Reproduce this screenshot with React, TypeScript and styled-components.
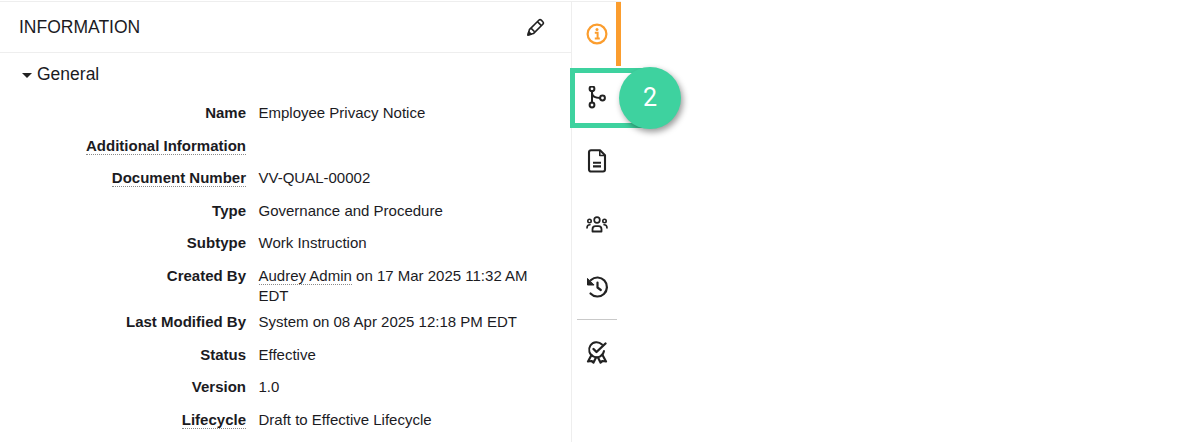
import React from "react";
import styled, { createGlobalStyle } from "styled-components";

const Global = createGlobalStyle`
  html, body { margin: 0; padding: 0; background: #fff; }
  body { font-family: "Liberation Sans", Arial, sans-serif; color: #1b1b1f; overflow: hidden; }
`;

const Page = styled.div`
  height: 442px;
  padding-top: 1px;
  box-sizing: border-box;
  overflow: hidden;
`;
const Layout = styled.div`
  display: flex;
  width: 621px;
  height: 441px;
  border-top: 1px solid #eeeeee;
`;
const Panel = styled.section`
  width: 571px;
  flex: none;
  border-right: 1px solid #eeeeee;
  box-sizing: content-box;
`;
const Header = styled.header`
  display: flex;
  align-items: center;
  justify-content: space-between;
  height: 50px;
  padding: 0 26px 0 19px;
  border-bottom: 1px solid #eeeeee;
`;
const Title = styled.h2`
  margin: 0;
  font-size: 17.5px;
  font-weight: 400;
  line-height: 50px;
`;
const IconButton = styled.button`
  display: flex;
  padding: 0;
  border: 0;
  background: none;
  color: #222;
`;
const SectionHead = styled.div`
  display: flex;
  align-items: center;
  gap: 5px;
  height: 42px;
  padding-left: 22px;
  margin-bottom: 5px;
  font-size: 17.5px;
`;
const Caret = styled.span`
  width: 0;
  height: 0;
  margin-top: 3px;
  border-left: 5px solid transparent;
  border-right: 5px solid transparent;
  border-top: 5px solid #222;
`;
const Row = styled.div`
  display: grid;
  grid-template-columns: 246px 287px;
  column-gap: 12.5px;
  min-height: 32.6px;
  padding: 3px 0;
  box-sizing: border-box;
  font-size: 15px;
  line-height: 20px;
`;
const Label = styled.div`
  text-align: right;
  font-weight: 700;
`;
const Dotted = styled.span`
  border-bottom: 1px dotted #8a8a8a;
`;
const Value = styled.div``;

const Rail = styled.nav`
  position: relative;
  width: 49px;
  flex: none;
`;
const RailItem = styled.div<{ $active?: boolean }>`
  position: relative;
  display: flex;
  align-items: center;
  justify-content: center;
  box-sizing: border-box;
  height: ${(p) => (p.$active ? 64 : 63)}px;
  padding-left: ${(p) => (p.$active ? 6 : 1)}px;
  border-right: ${(p) => (p.$active ? "5px solid #fb9d2e" : "0")};
  color: ${(p) => (p.$active ? "#fb9d2e" : "#222")};
`;
const Divider = styled.hr`
  width: 40px;
  margin: 0 0 0 5px;
  border: 0;
  border-top: 1px solid #c9c9c9;
`;
const Highlight = styled.div`
  position: absolute;
  left: -2px;
  top: 2px;
  width: 73px;
  height: 60px;
  box-sizing: border-box;
  border: 5px solid #3ed29f;
`;
const Step = styled.div`
  position: absolute;
  left: 47px;
  top: 1px;
  width: 62px;
  height: 62px;
  border-radius: 50%;
  background: #3ed29f;
  box-shadow: 2px 3px 6px rgba(0, 0, 0, 0.4);
  color: #fff;
  font-size: 25px;
  line-height: 62px;
  text-align: center;
  font-family: Roboto, "Liberation Sans", sans-serif;
  font-weight: 400;
`;
const GapDown = styled.div`
  height: 1px;
`;

const Svg: React.FC<{ children: React.ReactNode; size?: number }> = ({ children, size = 24 }) => (
  <svg width={size} height={size} viewBox="0 0 24 24" fill="none" stroke="currentColor" strokeWidth={2} strokeLinecap="round" strokeLinejoin="round">
    {children}
  </svg>
);

const rows: { label: string; dotted?: boolean; value: React.ReactNode }[] = [
  { label: "Name", value: "Employee Privacy Notice" },
  { label: "Additional Information", dotted: true, value: "" },
  { label: "Document Number", dotted: true, value: "VV-QUAL-00002" },
  { label: "Type", value: "Governance and Procedure" },
  { label: "Subtype", value: "Work Instruction" },
  { label: "Created By", value: <><Dotted>Audrey Admin</Dotted> on 17 Mar 2025 11:32 AM EDT</> },
  { label: "Last Modified By", value: "System on 08 Apr 2025 12:18 PM EDT" },
  { label: "Status", value: "Effective" },
  { label: "Version", value: "1.0" },
  { label: "Lifecycle", dotted: true, value: "Draft to Effective Lifecycle" },
];

export default function App() {
  return (
    <Page>
      <Global />
      <Layout>
        <Panel>
          <Header>
            <Title>INFORMATION</Title>
            <IconButton aria-label="Edit">
              <svg width="18" height="18" viewBox="0 0 18 18" fill="none" stroke="currentColor" strokeWidth="1.6" strokeLinejoin="round">
                <path d="M1 17 2.400 11.600 11.800 2.200a1.800 1.800 0 0 1 2.500 0l1.500 1.500a1.800 1.800 0 0 1 0 2.500L6.400 15.600z" />
                <path d="M10.400 3.600 14.400 7.600M4.200 10.400 7.600 13.800" />
                <path d="M1 17 1.800 13.800 4.200 16.200z" fill="currentColor" />
              </svg>
            </IconButton>
          </Header>
          <SectionHead>
            <Caret />
            General
          </SectionHead>
          {rows.map((r) => (
            <Row key={r.label}>
              <Label>{r.dotted ? <Dotted>{r.label}</Dotted> : r.label}</Label>
              <Value>{r.value}</Value>
            </Row>
          ))}
        </Panel>
        <Rail>
          <RailItem $active>
            <Svg>
              <circle cx="12" cy="12" r="9.400" strokeWidth={2.200} />
              <circle cx="12" cy="7.600" r="1.500" fill="currentColor" stroke="none" />
              <path d="M9.800 10.800H12.600V16M9.800 16.600H14.800" strokeWidth={2} strokeLinecap="butt" strokeLinejoin="miter" />
            </Svg>
          </RailItem>
          <RailItem>
            <Svg>
              <circle cx="7" cy="2.800" r="2.400" />
              <circle cx="7" cy="19" r="2.400" />
              <circle cx="17.500" cy="12" r="2.400" />
              <path d="M7 5.200v11.400M7 7c.3 3.400 3.200 5 8.100 5" />
            </Svg>
            <Highlight />
            <Step>2</Step>
          </RailItem>
          <RailItem>
            <Svg>
              <path d="M6 1.200h9L20 6.200v14.300a2 2 0 0 1-2 2H6a2 2 0 0 1-2-2v-17.300a2 2 0 0 1 2-2z" strokeWidth={2.100} />
              <path d="M14.800 1.800v4.700h4.700" strokeWidth={1.600} />
              <path d="M8 13.800h8M8 17.400h8" strokeWidth={2.100} strokeLinecap="butt" />
            </Svg>
          </RailItem>
          <RailItem>
            <Svg>
              <circle cx="12" cy="8" r="2.800" strokeWidth={1.700} />
              <circle cx="4.500" cy="9" r="1.700" strokeWidth={1.600} />
              <circle cx="19.500" cy="9" r="1.700" strokeWidth={1.600} />
              <path d="M7.500 19.500v-2.300a3 3 0 0 1 3-3h3a3 3 0 0 1 3 3v2.300z" strokeWidth={1.800} />
              <path d="M2 16c0-2 .8-3.200 3-3.200M22 16c0-2-.8-3.200-3-3.200" strokeWidth={1.600} />
            </Svg>
          </RailItem>
          <RailItem>
            <Svg>
              <path d="M6 5a9.500 9.500 0 1 1-.5 13.500" strokeWidth={2.200} />
              <path d="M2.500 3.800v6.200h6.200z" fill="currentColor" strokeWidth={1} />
              <path d="M12.500 7.500v5l3.300 2.500" strokeWidth={2.200} />
            </Svg>
          </RailItem>
          <GapDown />
          <Divider />
          <RailItem>
            <Svg>
              <path d="M17 4.500A7.500 7.500 0 1 0 19 11" strokeWidth={2} />
              <path d="m8.500 9 3 3L20.500 3.500" strokeWidth={2.400} />
              <path d="M6.500 15 3 21.500l3.500-.5 2 1.500 2.500-5M17.500 15 21 21.500l-3.500-.5-2 1.500-2.500-5" strokeWidth={2.200} />
            </Svg>
          </RailItem>
        </Rail>
      </Layout>
    </Page>
  );
}
